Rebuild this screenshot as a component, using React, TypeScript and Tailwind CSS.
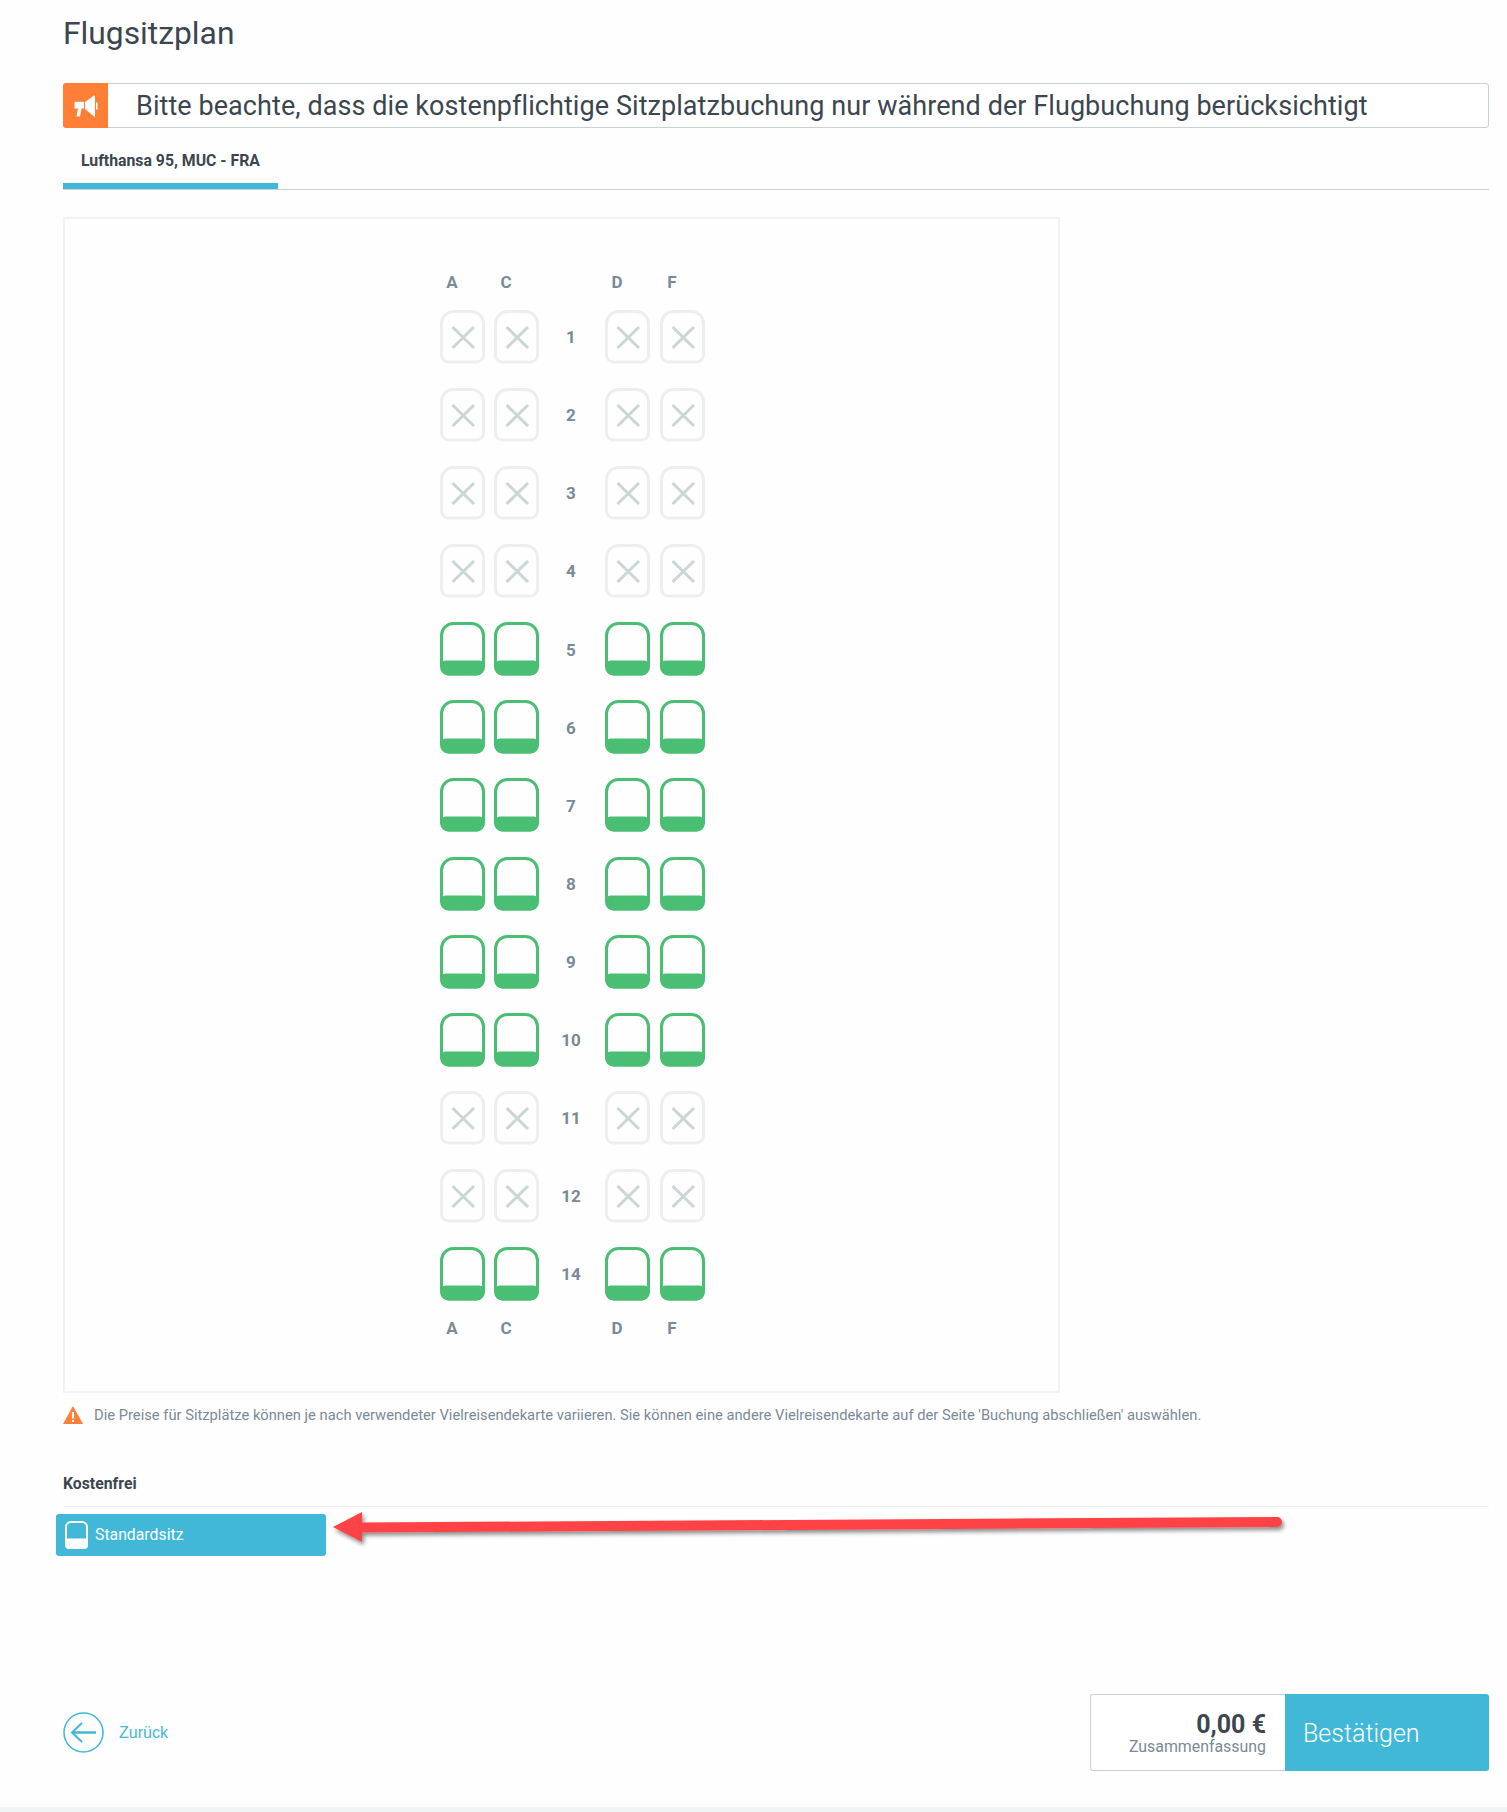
import { Fragment } from "react";

const taken = [1, 2, 3, 4, 11, 12];
const rows = [1, 2, 3, 4, 5, 6, 7, 8, 9, 10, 11, 12, 14];

function SeatTaken() {
  return (
    <svg width="45" height="54" viewBox="0 0 45 54" fill="none" aria-hidden>
      <path
        d="M1.500 13.500A12 12 0 0 1 13.500 1.500h18a12 12 0 0 1 12 12V45a7 7 0 0 1-7 7H8.500A7 7 0 0 1 1.500 45Z"
        stroke="#eceef0"
        strokeWidth="3"
      />
      <path d="M12.500 17 34 38M34 17 12.500 38" stroke="#cbd6d6" strokeWidth="3" />
    </svg>
  );
}

function SeatFree() {
  return (
    <svg width="45" height="54" viewBox="0 0 45 54" fill="none" aria-hidden>
      <path
        d="M1.500 13.500A12 12 0 0 1 13.500 1.500h18a12 12 0 0 1 12 12V45a7 7 0 0 1-7 7H8.500A7 7 0 0 1 1.500 45Z"
        stroke="#4abe73"
        strokeWidth="3"
      />
      <path
        d="M1 41Q2 39 6 38.500H39Q43 39 44 41V46a7.500 7.500 0 0 1-7.500 7.500H8.500A7.500 7.500 0 0 1 1 46Z"
        fill="#4abe73"
      />
    </svg>
  );
}

function Letters() {
  return (
    <div className="flex h-[22px] items-center text-[17px] font-bold leading-[22px] text-[#7a8a96]">
      <span className="w-[24px] text-center">A</span>
      <span className="ml-[30px] w-[24px] text-center">C</span>
      <span className="ml-[87px] w-[24px] text-center">D</span>
      <span className="ml-[31px] w-[24px] text-center">F</span>
    </div>
  );
}

export default function App() {
  return (
    <div className="relative flex h-[1812px] flex-col overflow-hidden bg-[#fefefe] font-['Roboto',sans-serif] text-[#3c4650]">
      <div className="flex-1 pl-[63px] pr-[18px]">
        <h1 className="pt-[14px] text-[31.800px] font-normal leading-[38px]">Flugsitzplan</h1>

        <div className="mt-[31px] flex h-[45px] items-center rounded-[3px] border border-[#c8d2d2] bg-white">
          <div className="-my-px -ml-px flex h-[45px] w-[45px] items-center justify-center rounded-l-[3px] bg-[#ff7f36]">
            <svg width="45" height="45" viewBox="0 0 45 45" fill="#fff" aria-hidden>
              <path d="M22 19 31 12.500Q32 12 32 13.500V33Q32 34.500 31 33.500L22 26Z" />
              <path d="M33 19.500h1.500v7H33Z" />
              <path d="M11.500 18.700H21V25.500H18.500L17 33.500H13.500L15 25.500H11.500Z" />
            </svg>
          </div>
          <p className="ml-[28px] whitespace-nowrap text-[27px] leading-[36px] tracking-[0.07px]">
            Bitte beachte, dass die kostenpflichtige Sitzplatzbuchung nur während der Flugbuchung berücksichtigt
          </p>
        </div>

        <div className="border-b border-[#c8d2d2]">
          <div className="flex h-[61px] w-[215px] items-center border-b-[6px] border-[#41b8d8] pl-[18px] pt-[10px] text-[15.800px] font-bold">
            Lufthansa 95, MUC - FRA
          </div>
        </div>

        <div className="mt-[27px] h-[1176px] w-[997px] border-2 border-[#f0f3f3] pl-[375px] pt-[52px]">
          <Letters />
          <div className="mt-[17px] grid grid-cols-[45px_45px_48px_46px_45px] gap-x-[9px] gap-y-[24.080px]">
            {rows.map((row) => {
              const Seat = taken.includes(row) ? SeatTaken : SeatFree;
              return (
                <Fragment key={row}>
                  <Seat />
                  <Seat />
                  <div className="flex h-[54px] items-center justify-center pr-[2px] pt-[2px] text-[17px] font-bold text-[#7a8a96]">
                    {row}
                  </div>
                  <Seat />
                  <Seat />
                </Fragment>
              );
            })}
          </div>
          <div className="mt-[16px]">
            <Letters />
          </div>
        </div>

        <div className="mt-[12px] flex h-[20px] items-center whitespace-nowrap text-[14.730px] text-[#7a8a96]">
          <svg width="20" height="18" viewBox="0 0 20 18" aria-hidden>
            <path d="M10 0 20 18H0Z" fill="#ff7f36" />
            <path d="M9 6h2v6.500H9zM9 14h2v2H9z" fill="#fff" />
          </svg>
          <span className="ml-[11px]">
            Die Preise für Sitzplätze können je nach verwendeter Vielreisendekarte variieren. Sie können eine andere Vielreisendekarte auf der Seite 'Buchung abschließen' auswählen.
          </span>
        </div>

        <div className="mt-[48px] border-b border-[#f0f1f1] pb-[11px] text-[15.800px] font-bold leading-[22px]">Kostenfrei</div>

        <div className="-ml-[7px] mt-[7px] flex h-[42px] w-[270px] items-center rounded-[3px] bg-[#41b8d8] pl-[9px] text-[15.800px] text-white">
          <svg width="23" height="28" viewBox="0 0 23 28" fill="none" aria-hidden>
            <path d="M1 6a5 5 0 0 1 5-5h11a5 5 0 0 1 5 5v18a3 3 0 0 1-3 3H4a3 3 0 0 1-3-3Z" stroke="#fff" strokeWidth="2" />
            <path d="M0.500 17.500h22v7a3 3 0 0 1-3 3h-16a3 3 0 0 1-3-3Z" fill="#fff" />
          </svg>
          <span className="ml-[7px]">Standardsitz</span>
        </div>

        <div className="mt-[138px] flex items-center justify-between">
          <div className="flex items-center text-[16px] text-[#41b8d8]">
            <svg width="41" height="41" viewBox="0 0 41 41" fill="none" stroke="#41b8d8" aria-hidden>
              <circle cx="20.500" cy="20.500" r="19.500" strokeWidth="1.500" />
              <path d="M33 20.500H9" strokeWidth="2.500" />
              <path d="M19 11 9 20.500 19 30" strokeWidth="2" />
            </svg>
            <span className="ml-[15px] font-['Liberation_Sans',sans-serif]">Zurück</span>
          </div>
          <div className="flex h-[77px]">
            <div className="flex w-[195px] flex-col items-end rounded-l-[3px] border border-r-0 border-[#c8d2d8] bg-white pr-[19px] pt-[17px]">
              <span className="text-[25px] font-bold leading-[25px]">0,00 €</span>
              <span className="text-[15.900px] leading-[19px] text-[#7a8a96]">Zusammenfassung</span>
            </div>
            <div className="flex w-[204px] items-center rounded-r-[3px] bg-[#41b8d8] pl-[18px] pt-[2px] text-[25px] font-light text-white">
              Bestätigen
            </div>
          </div>
        </div>
      </div>

      <div className="h-[5px] bg-[#f0f4f4]" />

      {/* red annotation arrow drawn over the page */}
      <svg className="absolute left-[320px] top-[1500px]" width="980" height="60" viewBox="0 0 980 60" fill="none" aria-hidden>
        <defs>
          <filter id="arrowShadow" x="-2%" y="-40%" width="104%" height="200%">
            <feDropShadow dx="2" dy="3" stdDeviation="2" floodColor="#000" floodOpacity="0.45" />
          </filter>
        </defs>
        <path
          d="M13 27 42 12v10.500L957 17a5 5 0 0 1 0 10L42 32.500V42Z"
          fill="#ff4245"
          filter="url(#arrowShadow)"
        />
      </svg>
    </div>
  );
}
